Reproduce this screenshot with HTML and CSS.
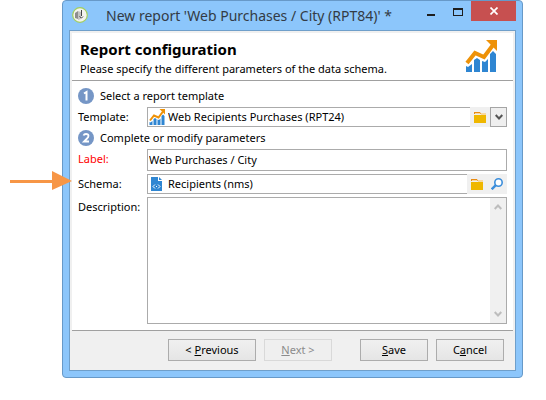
FILE: index.html
```html
<!DOCTYPE html>
<html lang="en">
<head>
<meta charset="utf-8">
<title>New report</title>
<link rel="stylesheet" href="styles.css">
</head>
<body>
<svg class="defs" width="0" height="0" aria-hidden="true">
  <symbol id="chart" viewBox="0 0 32 32">
    <path fill="#2f86d2" d="M1 26l2 1 4-3v8H1zM9 20l3-2 3 2v12H9zM17 21l3 1 3-3v13h-6zM25 14l3-3 3 3v18h-6z"/>
    <path fill="none" stroke="#ee9208" stroke-width="4" d="M2 23l8-10 9 4 9-12"/>
    <path fill="#ee9208" d="M21 0h11v11z"/>
  </symbol>
  <symbol id="folder" viewBox="0 0 12 11">
    <path fill="#e98b12" d="M0 0h6l1 2H0z"/>
    <path fill="#f7d9a0" d="M1 1h5v1H1zM7 1h5v2H7z"/>
    <path fill="#efb700" d="M0 3h12v8H0z"/>
  </symbol>
</svg>
<main class="window">
  <header class="titlebar">
    <svg class="app-icon" viewBox="0 0 16 16" aria-hidden="true">
      <circle cx="8" cy="8" r="7.3" fill="#f3f3ee" stroke="#a3cf5c" stroke-width="1.2"/>
      <path fill="#8d8d8d" d="M3 6l3-2v8l-3-1z"/>
      <path fill="#c4c4c4" d="M6 4l3 1v7l-3 1z"/>
      <path fill="none" stroke="#444" d="M9.500 3v6M7.500 9.500l2 1.500 1.500-1.500"/>
    </svg>
    <h1 class="title">New report 'Web Purchases / City (RPT84)' *</h1>
    <div class="window-controls">
      <button class="control" aria-label="Minimize"><svg width="8" height="12"><path fill="#1e1e1e" d="M0 9h8v2H0z"/></svg></button>
      <button class="control" aria-label="Maximize"><svg width="10" height="12"><path fill="#1e1e1e" fill-rule="evenodd" d="M0 3h10v8H0zM1 5v5h8V5z"/></svg></button>
      <button class="control close" aria-label="Close"><svg width="8" height="8"><path fill="none" stroke="#fff" stroke-width="1.700" d="M.5.5l7 7M7.500.5l-7 7"/></svg></button>
    </div>
  </header>
  <div class="client">
    <section class="banner">
      <div>
        <h2 class="heading">Report configuration</h2>
        <p class="subheading">Please specify the different parameters of the data schema.</p>
      </div>
      <svg class="banner-icon" aria-hidden="true"><use href="#chart"/></svg>
    </section>
    <form class="form">
      <h3 class="step"><svg class="badge" viewBox="0 0 16 16" aria-hidden="true"><circle cx="8" cy="8" r="8" fill="#7596c6"/><path fill="none" stroke="#fff" stroke-width="2" d="M6 5.500L8.500 4v8.500"/></svg>Select a report template</h3>
      <div class="row">
        <label for="template">Template:</label>
        <div class="field">
          <div class="box"><svg class="icon" aria-hidden="true"><use href="#chart"/></svg><input id="template" value="Web Recipients Purchases (RPT24)"></div>
          <button type="button" class="tool" aria-label="Browse templates"><svg width="12" height="11"><use href="#folder"/></svg></button>
          <button type="button" class="drop" aria-label="Show list"><svg width="8" height="6"><path fill="none" stroke="#555" stroke-width="2" d="M.7 1L4 4.500 7.300 1"/></svg></button>
        </div>
      </div>
      <h3 class="step second"><svg class="badge" viewBox="0 0 16 16" aria-hidden="true"><circle cx="8" cy="8" r="8" fill="#7596c6"/><path fill="none" stroke="#fff" stroke-width="1.800" d="M5.500 5.500C6 4.300 7 4 8 4c3.500 0 2.800 3 1 4.500L6 11.500h5"/></svg>Complete or modify parameters</h3>
      <div class="row tall">
        <label class="required" for="label">Label:</label>
        <div class="field"><div class="box"><input id="label" value="Web Purchases / City"></div></div>
      </div>
      <div class="row">
        <label for="schema">Schema:</label>
        <div class="field">
          <div class="box"><svg class="file" viewBox="0 0 11 14" aria-hidden="true"><path fill="#2f86d2" d="M0 0h7v4h4v10H0z"/><path fill="#2f86d2" d="M8 0l3 3H8z"/><path fill="none" stroke="#fff" d="M4 7.500L2 9.500l2 2M7 7.500l2 2-2 2M5 9.500h1"/></svg><input id="schema" value="Recipients (nms)"></div>
          <button type="button" class="tool" aria-label="Browse schemas"><svg width="12" height="11"><use href="#folder"/></svg></button>
          <button type="button" class="tool" aria-label="Open schema"><svg width="12" height="12"><circle cx="7.500" cy="4.500" r="3.700" fill="#fff" stroke="#3c8edb" stroke-width="1.600"/><path stroke="#3c8edb" stroke-width="2.400" d="M4.800 7.200L.7 11.300"/></svg></button>
        </div>
        <svg class="pointer" viewBox="0 0 62 20" aria-hidden="true"><path fill="#f79646" d="M0 9h42V0l20 10-20 9v-7H0z"/></svg>
      </div>
      <div class="row description">
        <label for="description">Description:</label>
        <div class="box area">
          <textarea id="description"></textarea>
          <div class="scroll" aria-hidden="true">
            <svg width="8" height="6"><path fill="none" stroke="#bdbdbd" stroke-width="2" d="M.7 5L4 1.500 7.300 5"/></svg>
            <svg width="8" height="6"><path fill="none" stroke="#bdbdbd" stroke-width="2" d="M.7 1L4 4.500 7.300 1"/></svg>
          </div>
        </div>
      </div>
    </form>
    <footer class="actions">
      <button class="btn wide"><span>&lt; <u>P</u>revious</span></button>
      <button class="btn" disabled><span><u>N</u>ext &gt;</span></button>
      <button class="btn apart"><span><u>S</u>ave</span></button>
      <button class="btn"><span>C<u>a</u>ncel</span></button>
    </footer>
  </div>
</main>
</body>
</html>
```
FILE: styles.css
```css
* { box-sizing: border-box; }
body {
  margin: 0;
  padding: 0 23px 0 62px;
  background: #fff;
  color: #000;
  font: 11px/16px "Noto Sans", "Open Sans", sans-serif;
}
h1, h2, h3, p { margin: 0; font-weight: 400; }
button, input, textarea { font: inherit; color: inherit; padding: 0; margin: 0; border: 0; }
button { display: flex; align-items: center; justify-content: center; }
svg { flex: none; display: block; }
.defs { position: absolute; }

.window {
  padding: 0 6px 6px;
  background: #8cc6fb;
  border: 1px solid #6799c8;
  border-radius: 4px;
}
.titlebar { display: flex; align-items: flex-start; height: 29px; }
.app-icon { width: 16px; height: 16px; margin: 6px 0 0 3px; }
.title { flex: 1; margin-left: 18px; font-size: 14px; line-height: 29px; color: #333b45; white-space: nowrap; }
.window-controls { display: flex; }
.control { width: 27px; height: 20px; background: none; }
.control.close { width: 45px; background: #c75050; }

.client { padding: 2px; background: #f0f0f0; border: 1px solid #6f9fca; }
.banner {
  display: flex;
  justify-content: space-between;
  height: 48px;
  padding: 7px 16px 0 8px;
  background: #fff;
  border-bottom: 1px solid #a0a0a0;
}
.heading { font-size: 15px; line-height: 18px; font-weight: 700; }
.subheading { margin-top: 3px; white-space: nowrap; }
.banner-icon { width: 32px; height: 32px; }

.form { padding: 7px 6px 6px; background: #fff; border-bottom: 1px solid #a0a0a0; }
.step { display: flex; align-items: center; gap: 6px; height: 16px; font-size: 11px; }
.second { margin-bottom: 3px; }
.badge { width: 16px; height: 16px; }
.row { position: relative; display: grid; grid-template-columns: 69px 1fr; height: 20px; margin: 3px 0; }
.row.tall { height: 22px; }
.row label { line-height: 20px; }
.required { color: #f00; }
.field { display: flex; min-width: 0; background: #f0f0f0; }
.box { display: flex; flex: 1; align-items: center; min-width: 0; padding-left: 1px; background: #fff; border: 1px solid #ababab; }
.field .box:not(:last-child) { border-right: 0; }
.box input { flex: 1; min-width: 0; height: 16px; background: none; outline: 0; }
.icon { width: 16px; height: 16px; margin-right: 3px; }
.file { width: 11px; height: 14px; margin: 0 6px 0 2px; }
.tool { width: 20px; background: #f0f0f0; }
.drop { width: 17px; background: #efefef; border: 1px solid #a5a5a5; }
.row.description { height: 127px; margin: 3px 0 0; }
.area { align-items: stretch; padding: 0; }
.area textarea { flex: 1; min-width: 0; resize: none; outline: 0; }
.scroll { display: flex; flex-direction: column; justify-content: space-between; align-items: center; width: 16px; padding: 6px 0; background: #f0f0f0; }
.pointer { position: absolute; left: -68px; top: -3px; width: 62px; height: 20px; }

.actions { display: flex; justify-content: flex-end; gap: 8px; padding: 8px 9px 7px; }
.btn { width: 68px; height: 22px; background: linear-gradient(#f0f0f0, #e5e5e5); border: 1px solid #acacac; }
.btn.wide { width: 88px; }
.btn.apart { margin-left: 20px; }
.btn:disabled { color: #8b8b8b; background: #efefef; border-color: #d9d9d9; }
```
